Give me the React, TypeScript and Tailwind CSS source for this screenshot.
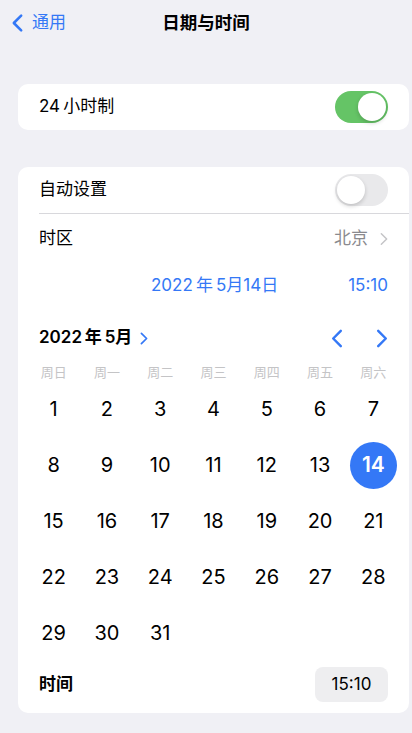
import React from "react";

const font = { fontFamily: 'Inter, "Noto Sans CJK SC", sans-serif' };

function Chevron({ dir = "right", className = "", w = 2.6 }: { dir?: "left" | "right"; className?: string; w?: number }) {
  return (
    <svg viewBox="0 0 12 20" className={className} fill="none" stroke="currentColor" strokeWidth={w} strokeLinecap="round" strokeLinejoin="round">
      {dir === "left" ? <path d="M10 2 2 10l8 8" /> : <path d="M2 2l8 8-8 8" />}
    </svg>
  );
}

function Toggle({ on }: { on: boolean }) {
  return (
    <div className={`flex h-[32px] w-[53px] items-center rounded-full p-[2px] ${on ? "justify-end bg-[#65c466]" : "justify-start bg-[#e9e9eb]"}`}>
      <div className="h-[28px] w-[28px] rounded-full bg-white shadow-[0_2px_4px_rgba(0,0,0,0.18)]" />
    </div>
  );
}

const weekdays = ["周日", "周一", "周二", "周三", "周四", "周五", "周六"];
const days = Array.from({ length: 31 }, (_, i) => i + 1);

export default function App() {
  return (
    <div className="min-h-[733px] w-[412px] bg-[#f0f0f5] text-black" style={font}>
      <div className="relative flex h-[46px] items-center">
        <div className="flex items-center pl-[12px] text-[#3478f6]">
          <Chevron dir="left" className="h-[20px] w-[11px]" w={2.8} />
          <span className="ml-[9px] text-[17px]">通用</span>
        </div>
        <div className="absolute left-0 right-0 top-0 flex h-[46px] items-center justify-center text-[17.5px] font-semibold">
          日期与时间
        </div>
      </div>

      <div className="ml-[18px] mt-[38px] flex h-[46px] w-[391px] items-center justify-between rounded-[10px] bg-white pl-[21px] pr-[21px]">
        <span className="text-[17px]">24{"\u2009"}小时制</span>
        <Toggle on />
      </div>

      <div className="ml-[18px] mt-[37px] w-[391px] rounded-[10px] bg-white pb-[5px]">
        <div className="flex h-[46px] items-center justify-between pl-[21px] pr-[21px]">
          <span className="text-[17px]">自动设置</span>
          <Toggle on={false} />
        </div>
        <div className="ml-[21px] h-px bg-[#d8d8dc]" />
        <div className="flex h-[49px] items-center justify-between pl-[21px] pr-[21px]">
          <span className="text-[17px]">时区</span>
          <div className="flex items-center gap-[12px] text-[#8a8a8e]">
            <span className="text-[17px]">北京</span>
            <Chevron className="h-[14px] w-[8px] text-[#c4c4c7]" w={2.2} />
          </div>
        </div>
        <div className="flex h-[46px] items-center justify-end pr-[21px] text-[17px] text-[#3478f6]">
          <span className="mr-[70px]">2022{"\u2009"}年{"\u2009"}5月14日</span>
          <span>15:10</span>
        </div>

        <div className="mt-[7px] flex h-[44px] items-center justify-between pl-[21px] pr-[21px]">
          <div className="flex items-center gap-[8px]">
            <span className="text-[17px] font-semibold">2022{"\u2009"}年{"\u2009"}5月</span>
            <Chevron className="h-[13px] w-[8px] text-[#3478f6]" />
          </div>
          <div className="flex items-center gap-[33px] text-[#3478f6]">
            <Chevron dir="left" className="h-[19px] w-[12px]" />
            <Chevron className="h-[19px] w-[12px]" />
          </div>
        </div>

        <div className="grid h-[21px] grid-cols-7 items-end px-[9px]">
          {weekdays.map((w) => (
            <div key={w} className="text-center text-[13px] leading-[18px] text-[#c4c4c6]">
              {w}
            </div>
          ))}
        </div>

        <div className="grid grid-cols-7 px-[9px]">
          {days.map((d) => (
            <div key={d} className="flex h-[56px] items-center justify-center">
              {d === 14 ? (
                <div className="flex h-[47px] w-[47px] items-center justify-center rounded-full bg-[#3478f6] text-[21px] font-semibold text-white">
                  14
                </div>
              ) : (
                <span className="text-[20px]">{d}</span>
              )}
            </div>
          ))}
        </div>

        <div className="flex h-[47px] items-center justify-between pl-[21px] pr-[21px]">
          <span className="text-[17px] font-semibold">时间</span>
          <div className="flex h-[35px] w-[73px] items-center justify-center rounded-[8px] bg-[#eeeef0] text-[17px]">
            15:10
          </div>
        </div>
      </div>
    </div>
  );
}
